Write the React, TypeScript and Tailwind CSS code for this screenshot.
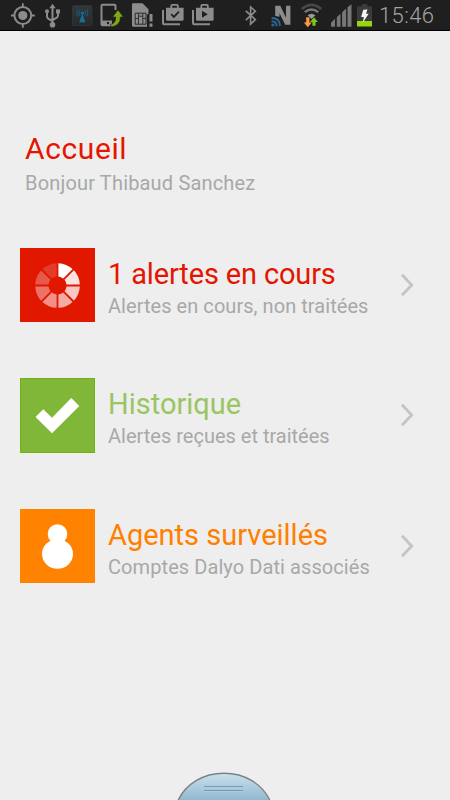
import type { ReactNode } from 'react'

type MenuItem = {
  title: string
  subtitle: string
  titleClass: string
  subtitleClass: string
  tileClass: string
  icon: ReactNode
}

const GREY = '#8c8c8c'

// Spinner wedges, clockwise from the top
const WEDGES = [1, 0.88, 0.76, 0.64, 0.52, 0.4, 0.28, 0.16]

function LoaderIcon() {
  return (
    <svg width="75" height="75" viewBox="0 0 75 75">
      {WEDGES.map((opacity, i) => (
        <path
          key={i}
          d="M38.4 15.2 A22.3 22.3 0 0 1 52.6 21.1 L43.2 30.5 A9 9 0 0 0 38.4 28.5 Z"
          fill="#fff"
          opacity={opacity}
          transform={`rotate(${i * 45} 37.5 37.5)`}
        />
      ))}
    </svg>
  )
}

function CheckIcon() {
  return (
    <svg width="75" height="75" viewBox="0 0 75 75">
      <path d="M23.3 31.3 L32 39.7 L51.3 20 L59.3 28 L32 55.3 L15.5 39 Z" fill="#fff" />
    </svg>
  )
}

function AgentIcon() {
  return (
    <svg width="75" height="75" viewBox="0 0 75 75" fill="#fff">
      <circle cx="37.5" cy="25" r="9.8" />
      <ellipse cx="37.5" cy="45" rx="15.5" ry="14.7" />
    </svg>
  )
}

const ITEMS: MenuItem[] = [
  {
    title: '1 alertes en cours',
    subtitle: 'Alertes en cours, non traitées',
    titleClass: 'text-[#e51500] tracking-[-0.15px]',
    subtitleClass: 'tracking-[0.05px]',
    tileClass: 'bg-[#e11700]',
    icon: <LoaderIcon />,
  },
  {
    title: 'Historique',
    subtitle: 'Alertes reçues et traitées',
    titleClass: 'text-[#9ac562]',
    subtitleClass: '',
    tileClass: 'bg-[#81b738] shadow-[inset_0_0_0_1px_#74b10f]',
    icon: <CheckIcon />,
  },
  {
    title: 'Agents surveillés',
    subtitle: 'Comptes Dalyo Dati associés',
    titleClass: 'text-[#ff8000]',
    subtitleClass: 'tracking-[0.08px]',
    tileClass: 'bg-[#ff8200]',
    icon: <AgentIcon />,
  },
]

function StatusBar() {
  return (
    <div className="flex h-[31px] shrink-0 overflow-hidden border-b border-black bg-[#1f1f1f]">
      {/* GPS */}
      <svg className="ml-[11px] shrink-0" width="25" height="31" viewBox="11 0 25 31" fill="none" stroke={GREY}>
        <circle cx="22.8" cy="15.5" r="8.4" strokeWidth="2" />
        <circle cx="22.8" cy="15.5" r="4.6" fill={GREY} stroke="none" />
        <path d="M22.8 3.3v4M22.8 23.7v4M11 15.5h3.6M31 15.5h3.8" strokeWidth="1.8" />
      </svg>
      {/* USB */}
      <svg className="ml-[8px] shrink-0" width="18" height="31" viewBox="44 0 18 31" fill="none" stroke={GREY} strokeWidth="2">
        <path d="M52.5 7v17M47 12v4.5q0 1.5 1.5 2.3l4 2.2M58 12v3.5q0 1.5-1.5 2.3l-4 2.2" />
        <path d="M49.3 8.3 52.5 3.7 55.7 8.3Z" fill={GREY} stroke="none" />
        <circle cx="52.5" cy="24.8" r="2.8" fill={GREY} stroke="none" />
        <circle cx="47" cy="11.3" r="2" fill={GREY} stroke="none" />
        <path d="M56 9.4h4v4h-4z" fill={GREY} stroke="none" />
      </svg>
      {/* Antenna */}
      <svg className="ml-[10px] shrink-0" width="21" height="31" viewBox="72 0 21 31" fill="none">
        <defs>
          <linearGradient id="antenna" x1="0" y1="0" x2="0" y2="1">
            <stop offset="0" stopColor="#343739" />
            <stop offset="1" stopColor="#272a2c" />
          </linearGradient>
        </defs>
        <rect x="72.5" y="5.5" width="19.5" height="20" rx="1.5" fill="url(#antenna)" stroke="#303335" />
        <path d="M82.3 13.5 79.2 22.2h6.2Z" fill="#196f91" />
        <circle cx="82.3" cy="13" r="1.5" fill="#196f91" />
        <path d="M79.9 10.5q-1.7 2.5 0 5M84.7 10.5q1.7 2.5 0 5M78 9.5q-2.4 3.5 0 7M86.6 9.5q2.4 3.5 0 7" stroke="#175a75" strokeWidth="1.2" />
      </svg>
      {/* Phone transfer */}
      <svg className="ml-[7px] shrink-0" width="24" height="31" viewBox="100 0 24 31" fill="none">
        <path d="M115.5 10V5.8q0-1-1-1h-12q-1 0-1 1v18.5q0 1 1 1h12" stroke={GREY} strokeWidth="2" />
        <path d="M102 20.5h10v5h-10z" fill={GREY} />
        <circle cx="108" cy="23" r="1.2" fill="#1f1f1f" />
        <path d="M118 9.8 123.4 17h-3q.2 8-7.8 9.6-2.3 0-2.3-2.2 5.6-.6 5.4-7.4h-3.1Z" fill="#7daa10" stroke="#1f1f1f" strokeWidth="0.6" />
      </svg>
      {/* SIM */}
      <svg className="ml-[8px] shrink-0" width="22" height="31" viewBox="132 0 22 31" fill="none">
        <path d="M132 4.5q0-1.2 1.2-1.2h9.3l6 6v4.5q-1.5 0-1.5 1.5v11.5h-13.8q-1.2 0-1.2-1.2Z" fill={GREY} />
        <path d="M135.2 13.2h10.8v11h-10.8z" stroke="#292929" strokeWidth="1" />
        <path d="M138.5 13.2v11M142.8 13.2v11M135.2 18.5h3.3M142.8 18.5h3.2M138.5 16.2h4.3" stroke="#292929" strokeWidth="0.9" />
        <path d="M149.5 14h3v7.5h-3zM149.5 23.5h3v3.3h-3z" fill={GREY} />
      </svg>
      {/* Play Store, updated */}
      <svg className="ml-[8px] shrink-0" width="23" height="31" viewBox="162 0 23 31" fill="none" stroke={GREY}>
        <path d="M163 10v13q0 1.2 1.2 1.2H180" strokeWidth="2" />
        <path d="M171.3 8V5.8q0-1 1-1h4.5q1 0 1 1V8" strokeWidth="1.8" />
        <path d="M166 7.7h17.6v11.5q0 1.6-1.6 1.6h-14.4q-1.6 0-1.6-1.6Z" fill={GREY} stroke="none" />
        <path d="m171.2 14.2 2.7 2.7 5.1-5.2" stroke="#202020" strokeWidth="1.8" />
      </svg>
      {/* Play Store */}
      <svg className="ml-[7px] shrink-0" width="23" height="31" viewBox="192 0 23 31" fill="none" stroke={GREY}>
        <path d="M193 10v13q0 1.2 1.2 1.2H210" strokeWidth="2" />
        <path d="M201.3 8V5.8q0-1 1-1h4.5q1 0 1 1V8" strokeWidth="1.8" />
        <path d="M196 7.7h17.6v11.5q0 1.6-1.6 1.6h-14.4q-1.6 0-1.6-1.6Z" fill={GREY} stroke="none" />
        <path d="M202 10.8v7l5.8-3.5Z" fill="#202020" stroke="none" />
      </svg>
      {/* Bluetooth */}
      <svg className="ml-auto shrink-0" width="14" height="31" viewBox="244 0 14 31" fill="none" stroke={GREY} strokeWidth="1.6">
        <path d="m245.8 10.8 9.6 8.8-4.8 4.6V7l4.8 4.2-9.6 8.9" />
      </svg>
      {/* NFC */}
      <svg className="ml-[13px] shrink-0" width="21" height="31" viewBox="271 0 21 31" fill="none">
        <path d="M275.2 16V5.7h5.1l5.7 12V5.7h4.4v19.1h-5.2l-5.7-11.5v3.5Z" fill={GREY} />
        <circle cx="272.8" cy="25" r="1.6" fill="#276796" />
        <path d="M271.6 21.2q5 .1 5 5M271.6 18q8.3.1 8.3 8" stroke="#276796" strokeWidth="2" />
      </svg>
      {/* Wi-Fi */}
      <svg className="ml-[9px] shrink-0" width="22" height="31" viewBox="301 0 22 31" fill="none">
        <path d="M301.8 9q9.7-8.4 19.4 0" stroke="#484848" strokeWidth="2.6" />
        <path d="M304.8 12.2q6.7-5.6 13.4 0" stroke="#777" strokeWidth="2.4" />
        <path d="M307.6 15.2q3.9-3.1 7.8 0L311.5 19Z" fill="#999" />
        <path d="m307.8 27.3-3.9-4.8h2.3v-5.3h3.2v5.3h2.3Z" fill="#ff9b3d" />
        <path d="m314 17.2 3.9 4.8h-2.3v3.8h-3.2V22h-2.3Z" fill="#7cc718" />
      </svg>
      {/* Signal */}
      <svg className="ml-[8px] shrink-0" width="22" height="31" viewBox="331 0 22 31" fill="#777">
        <path d="M331 26.5v-4l4-4v8zM336.8 26.5V17l3.7-3.6v13.1zM342.1 26.5V12l4-3.8v18.3zM347.5 26.5V7l4-3v22.5z" transform="translate(0 .3)" />
      </svg>
      {/* Battery */}
      <svg className="ml-[4px] shrink-0" width="16" height="31" viewBox="357 0 16 31">
        <path d="M362 4h5.5v2.3h4.5V21h-15V6.3h5Z" fill="#3b3b3b" />
        <path d="M357 21h15v5.5h-15Z" fill="#95d60f" />
        <path d="m363.3 9.7 4.2-.2-1.5 4.2h2.7L362.6 23l1.3-6h-2.8Z" fill="#f5f5f5" />
      </svg>
      <span className="mr-[14px] ml-[6px] w-[57px] shrink-0 text-[22px] leading-[31px] font-light tracking-[0.4px] whitespace-nowrap text-[#a3a3a3]">
        15:46
      </span>
    </div>
  )
}

function MenuRow({ item }: { item: MenuItem }) {
  return (
    <button className="flex h-[74.5px] w-full items-center text-left">
      <div className={`h-full w-[75px] shrink-0 overflow-hidden ${item.tileClass}`}>{item.icon}</div>
      <div className="ml-[13px] flex-1 pt-[7px] whitespace-nowrap">
        <div className={`text-[29px] leading-[34px] ${item.titleClass}`}>{item.title}</div>
        <div className={`mt-px text-[20px] leading-[28px] text-[#a8a8a8] ${item.subtitleClass}`}>{item.subtitle}</div>
      </div>
      <svg className="mr-[36px] shrink-0" width="14" height="24" viewBox="0 0 14 24" fill="none" stroke="#c4c4c4" strokeWidth="2.8">
        <path d="M2 1.7 11.7 12 2 22.3" />
      </svg>
    </button>
  )
}

export default function App() {
  return (
    <div className="flex h-[800px] w-[450px] flex-col overflow-hidden bg-[#eeeeee] font-[Roboto,sans-serif]">
      <StatusBar />

      <div className="mt-[100px] pl-[25px] whitespace-nowrap">
        <h1 className="text-[30px] leading-[36px] tracking-[0.6px] text-[#e51500]">Accueil</h1>
        <p className="mt-[2px] text-[20px] leading-[28px] tracking-[0.17px] text-[#a8a8a8]">Bonjour Thibaud Sanchez</p>
      </div>

      <div className="mt-[50.6px] flex flex-col gap-[56px] pl-[20px]">
        {ITEMS.map(item => (
          <MenuRow key={item.title} item={item} />
        ))}
      </div>

      {/* Drawer handle */}
      <svg className="mx-auto mt-auto block shrink-0 translate-x-[-1px]" width="96" height="28" viewBox="0 0 96 28">
        <defs>
          <linearGradient id="handle" x1="0" y1="0" x2="0" y2="28" gradientUnits="userSpaceOnUse">
            <stop offset="0" stopColor="#cde3ef" />
            <stop offset="1" stopColor="#91b8cf" />
          </linearGradient>
        </defs>
        <path d="M2.2 28C10 12 27 1.3 48 1.3S86 12 93.8 28" fill="url(#handle)" stroke="#808080" strokeWidth="1.4" />
        <path d="M28 14.5h39M28 18.5h39" stroke="#6f9bb5" />
        <path d="M28 15.5h39M28 19.5h39" stroke="#b4d1e0" opacity="0.6" />
      </svg>
    </div>
  )
}
